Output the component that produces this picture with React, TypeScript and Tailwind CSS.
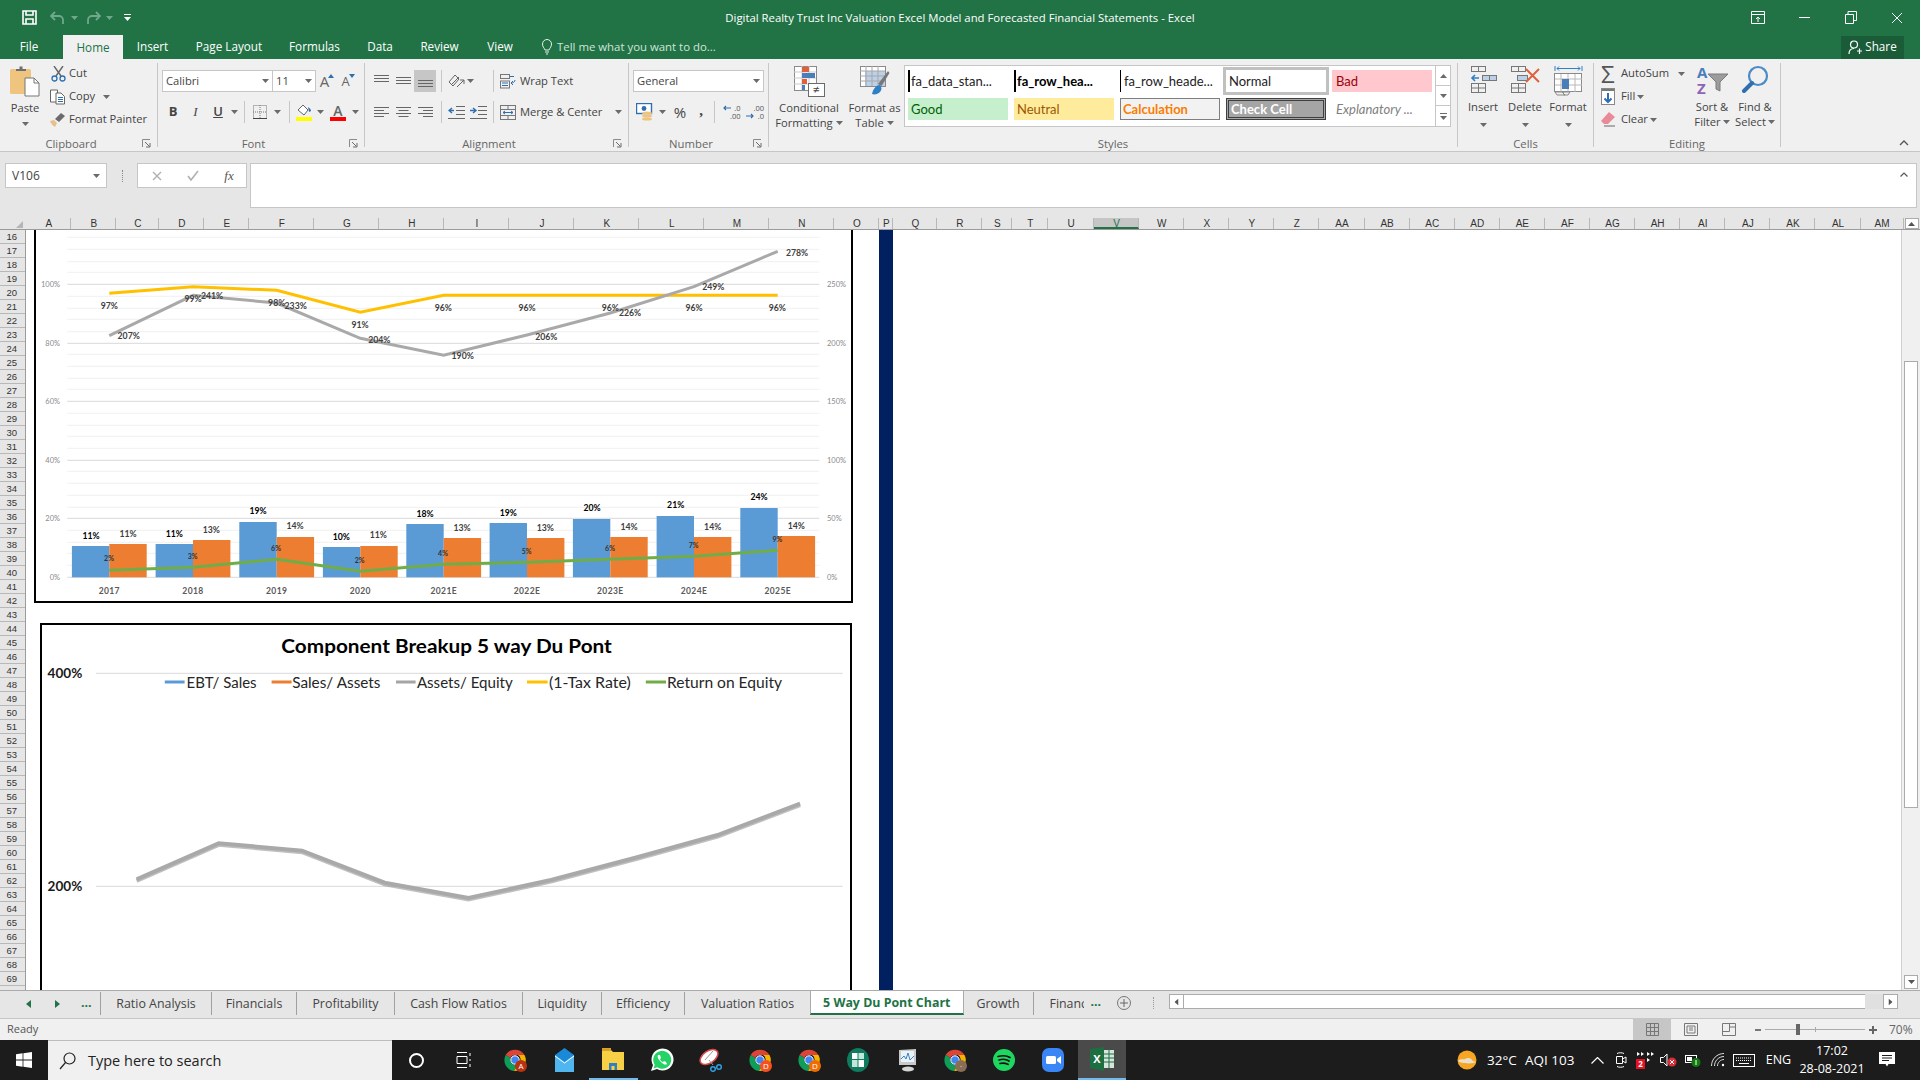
import type { ReactNode } from 'react';

// --- small ribbon helpers ---
const Caret = ({ className = '', color = '#6a6a6a' }: { className?: string; color?: string }) => (
  <svg width="7" height="4" viewBox="0 0 7 4" className={className}>
    <polygon points="0,0 7,0 3.5,4" fill={color} />
  </svg>
);

const Launcher = () => (
  <svg width="9" height="9" viewBox="0 0 9 9" className="mt-[3px]">
    <path d="M.5 8V.5H8" fill="none" stroke="#8a8a8a" />
    <path d="M3 3l4.5 4.5M8 4v4H4" fill="none" stroke="#6a6a6a" />
  </svg>
);

const Group = ({ width, label, launcher, children }: { width: string; label: string; launcher?: boolean; children: ReactNode }) => (
  <div className={`${width} h-[84px] shrink-0 border-r border-[#c6c6c6] flex flex-col`}>
    <div className="h-[70px] shrink-0">{children}</div>
    <div className="h-[20px] shrink-0 flex leading-[21px] text-[#666] text-[11.3px]">
      <div className="flex-1 text-center">{label}</div>
      {launcher && <div className="w-[15px] pt-[3px]"><Launcher /></div>}
    </div>
  </div>
);

const Lines = ({ rows, color = '#666' }: { rows: number[][]; color?: string }) => (
  <svg width="15" height="13" viewBox="0 0 15 13">
    {rows.map((r, i) => <line key={i} x1={r[0]} x2={r[1]} y1={r[2]} y2={r[2]} stroke={color} />)}
  </svg>
);

const Sep = ({ className = '' }: { className?: string }) => <div className={`w-px h-[22px] bg-[#c6c6c6] ${className}`} />;

const Cell = ({ width, children, className = '' }: { width: string; children?: ReactNode; className?: string }) => (
  <div className={`${width} h-full shrink-0 flex items-center justify-center ${className}`}>{children}</div>
);

const ClipboardIcon = () => (
  <svg width="30" height="32" viewBox="0 0 30 32">
    <rect x="0" y="3" width="21" height="25" rx="1.5" fill="#eec47f" />
    <path d="M6 5V3h3.5V.5h3V3H16v2z" fill="#6e6e6e" />
    <path d="M15 12h9l5 5v13H15z" fill="#fff" stroke="#777" />
    <path d="M24 12v5h5" fill="none" stroke="#777" />
  </svg>
);

const ScissorsIcon = () => (
  <svg width="15" height="16" viewBox="0 0 15 16" fill="none">
    <path d="M3 0l7 10M12 0L5 10" stroke="#666" strokeWidth="1.4" />
    <circle cx="3.5" cy="12.5" r="2.5" stroke="#2f6fb0" strokeWidth="1.3" />
    <circle cx="11.5" cy="12.5" r="2.5" stroke="#2f6fb0" strokeWidth="1.3" />
  </svg>
);

const CopyIcon = () => (
  <svg width="16" height="16" viewBox="0 0 16 16" fill="none" stroke="#666">
    <path d="M.5 1h7v12h-7z" fill="#fff" />
    <path d="M6 4h5l3.5 3.5V15H6z" fill="#fff" />
    <path d="M8 8.5h5M8 10.5h5M8 12.5h5" stroke="#2f6fb0" />
  </svg>
);

const PainterIcon = () => (
  <svg width="16" height="15" viewBox="0 0 16 15">
    <path d="M0 9l4-1 3 3-2 4c-2-1-4-3-5-6z" fill="#e9c088" />
    <path d="M5 7l6-6 4 3-6 6z" fill="#6b6b6b" />
  </svg>
);

const GrowIcon = ({ size, up }: { size: string; up: boolean }) => (
  <div className="flex items-start">
    <span className={`${size} leading-[14px] text-[#666]`}>A</span>
    <svg width="6" height="4" viewBox="0 0 6 4" className="-ml-px">
      <polygon points={up ? '0,4 6,4 3,0' : '0,0 6,0 3,4'} fill="#2f6fb0" />
    </svg>
  </div>
);

const BordersIcon = () => (
  <svg width="14" height="14" viewBox="0 0 14 14" stroke="#777" strokeDasharray="1 1" fill="none">
    <rect x=".5" y=".5" width="13" height="13" />
    <path d="M7 0v14M0 7h14" />
    <path d="M0 13.5h14" strokeDasharray="none" stroke="#444" />
  </svg>
);

const FillIcon = () => (
  <svg width="17" height="18" viewBox="0 0 17 18">
    <path d="M2 7l5-5 5 5-4 5z" fill="#fff" stroke="#666" />
    <path d="M12 4c2 1 3 3 3 4l-2 1z" fill="#2f6fb0" />
    <rect x="0" y="14" width="16" height="4" fill="#ffff00" />
  </svg>
);

const FontColorIcon = () => (
  <div className="flex flex-col items-center w-[16px]">
    <span className="text-[14px] leading-[13px] font-semibold text-[#666]">A</span>
    <div className="w-[16px] h-[4px] bg-[#ff0000]" />
  </div>
);

const OrientIcon = () => (
  <svg width="17" height="16" viewBox="0 0 17 16" fill="none" stroke="#666">
    <path d="M1 9l6-7 4 4-6 7z" />
    <path d="M3 12l8-8" />
    <path d="M9 14l7-7M16 11V7h-4" />
  </svg>
);

const WrapIcon = () => (
  <svg width="16" height="15" viewBox="0 0 16 15" fill="none">
    <rect x=".5" y=".5" width="9" height="4" stroke="#777" />
    <rect x=".5" y="7" width="9" height="7" stroke="#777" />
    <path d="M2 9h6M2 11.5h6" stroke="#2f6fb0" />
    <path d="M10 2.5h4M15 6c0 2-2 3-4 3m2-2l-2 2 2 2" stroke="#2f6fb0" />
  </svg>
);

const MergeIcon = () => (
  <svg width="16" height="15" viewBox="0 0 16 15" fill="none">
    <rect x=".5" y=".5" width="15" height="14" stroke="#777" />
    <path d="M0 4.5h16M0 10.5h16M8 0v4.5M8 10.5V15" stroke="#777" />
    <path d="M3 7.5h10M3 7.5l2-1.5M3 7.5l2 1.5M13 7.5L11 6M13 7.5L11 9" stroke="#2f6fb0" />
  </svg>
);

const IndentIcon = ({ inc }: { inc?: boolean }) => (
  <svg width="17" height="13" viewBox="0 0 17 13" fill="none">
    <path d="M8 .5h9M8 4.5h9M8 8.5h9M0 12.5h17" stroke="#666" />
    <path d={inc ? 'M0 4.5h5M3 2l3 2.5L3 7' : 'M6 4.5H1M4 2L1 4.5 4 7'} stroke="#2f6fb0" strokeWidth="1.4" />
  </svg>
);

const AccountingIcon = () => (
  <svg width="17" height="18" viewBox="0 0 17 18">
    <rect x=".5" y=".5" width="15" height="10" fill="#fff" stroke="#2f6fb0" strokeWidth="1.4" />
    <circle cx="8" cy="5.5" r="2.4" fill="#2f6fb0" />
    <ellipse cx="11" cy="10" rx="5" ry="1.6" fill="#eec47f" />
    <ellipse cx="11" cy="13" rx="5" ry="1.6" fill="#eec47f" />
    <ellipse cx="11" cy="16" rx="5" ry="1.6" fill="#eec47f" />
  </svg>
);

const DecimalIcon = ({ more }: { more?: boolean }) => (
  <div className="w-[18px] text-[7.5px] leading-[8px] text-[#555] relative">
    <div className="text-right">{more ? '.00' : '.0'}</div>
    <div className="text-right">{more ? '.0' : '.00'}</div>
    <svg width="8" height="6" viewBox="0 0 8 6" className={`absolute left-0 ${more ? 'top-[9px]' : 'top-[1px]'}`} fill="none" stroke="#2f6fb0" strokeWidth="1.2">
      <path d={more ? 'M0 3h7M5 1l2 2-2 2' : 'M8 3H1M3 1L1 3l2 2'} />
    </svg>
  </div>
);

const CondFormatIcon = () => (
  <svg width="31" height="31" viewBox="0 0 31 31">
    <rect x=".5" y=".5" width="22" height="24" fill="#fff" stroke="#8a8a8a" />
    <path d="M8 0v24M15 0v24M0 6h22M0 12h22M0 18h22" stroke="#c9c9c9" />
    <rect x="8" y="1" width="7" height="5" fill="#e0603c" />
    <rect x="8" y="7" width="13" height="5" fill="#4a7ebb" />
    <rect x="8" y="13" width="5" height="5" fill="#e0603c" />
    <rect x="8" y="19" width="3" height="5" fill="#4a7ebb" />
    <rect x="14.5" y="17.5" width="16" height="13" fill="#fff" stroke="#6a6a6a" />
    <text x="22.5" y="28" textAnchor="middle" fontSize="12" fill="#444">≠</text>
  </svg>
);

const TableIcon = () => (
  <svg width="30" height="31" viewBox="0 0 30 31">
    <rect x=".5" y=".5" width="25" height="20" fill="#fff" stroke="#8a8a8a" />
    <rect x="5" y="5" width="20" height="15" fill="#bcd0e8" />
    <path d="M6 0v20M12 0v20M18 0v20M0 5h25M0 10h25M0 15h25" stroke="#a8a8a8" />
    <path d="M18 18L28 5l1.5 2-8 13z" fill="#777" />
    <path d="M12 28c1-5 4-9 8-9 2 2 2 5 0 7-2 2-5 3-8 2z" fill="#2f7fc5" />
  </svg>
);

const InsertIcon = () => (
  <svg width="27" height="27" viewBox="0 0 27 27" fill="none">
    <rect x="1.5" y=".5" width="14" height="5" stroke="#777" />
    <path d="M8.5 0v5" stroke="#777" />
    <rect x="12.5" y="9.5" width="14" height="5" fill="#bcd0e8" stroke="#777" />
    <path d="M19.5 9v6" stroke="#777" />
    <path d="M9 12H2M5 9l-3 3 3 3" stroke="#2f7fc5" strokeWidth="1.6" />
    <rect x="1.5" y="17.5" width="14" height="9" stroke="#777" />
    <path d="M8.5 17v10M1 22h15" stroke="#777" />
  </svg>
);

const DeleteIcon = () => (
  <svg width="31" height="27" viewBox="0 0 31 27" fill="none">
    <rect x="1.5" y=".5" width="14" height="5" stroke="#777" />
    <path d="M8.5 0v5" stroke="#777" />
    <rect x="7.5" y="9.5" width="10" height="5" fill="#bcd0e8" stroke="#777" />
    <rect x="1.5" y="17.5" width="14" height="9" stroke="#777" />
    <path d="M8.5 17v10M1 22h15" stroke="#777" />
    <path d="M16 3l13 13M29 3L16 16" stroke="#e0603c" strokeWidth="2" />
  </svg>
);

const FormatIcon = () => (
  <svg width="29" height="30" viewBox="0 0 29 30" fill="none">
    <path d="M1 0v5M28 0v5M3 2.5h23M3 2.5l2-2M3 2.5l2 2M26 2.5l-2-2M26 2.5l-2 2" stroke="#2f7fc5" />
    <rect x=".5" y="7.5" width="27" height="18" fill="#fff" stroke="#8a8a8a" />
    <path d="M7 8v18M14 8v18M21 8v18M1 13h27M1 19h27" stroke="#b8b8b8" />
    <rect x="8" y="13" width="7" height="10" fill="#4a7ebb" />
    <path d="M1 26h7l3 3H3zM9 26h7l-2 3h-4z" stroke="#8a8a8a" />
  </svg>
);

const FillDownIcon = () => (
  <svg width="14" height="17" viewBox="0 0 14 17" fill="none">
    <rect x=".5" y=".5" width="13" height="16" fill="#fff" stroke="#888" />
    <path d="M1 1h12v2H1z" fill="#777" />
    <path d="M7 5v9M3.5 10.5L7 14l3.5-3.5" stroke="#2f6fb0" strokeWidth="2" />
  </svg>
);

const EraserIcon = () => (
  <svg width="15" height="15" viewBox="0 0 15 15">
    <path d="M0 9l8-9 6 5-7 7H3z" fill="#e98a98" />
    <path d="M3 14h11" stroke="#666" />
  </svg>
);

const SortIcon = () => (
  <svg width="32" height="31" viewBox="0 0 32 31">
    <text x="1" y="13" fontSize="15" fontWeight="700" fill="#4a7ebb">A</text>
    <text x="1" y="29" fontSize="15" fontWeight="700" fill="#8e63b5">Z</text>
    <path d="M12 9h20l-8 8v9l-4-2v-7z" fill="#9c9c9c" stroke="#7a7a7a" />
  </svg>
);

const FindIcon = () => (
  <svg width="28" height="28" viewBox="0 0 28 28" fill="none">
    <circle cx="17" cy="11" r="9" stroke="#4a8ac7" strokeWidth="2.2" />
    <path d="M11 18L3 26" stroke="#2f6fb0" strokeWidth="4" strokeLinecap="round" />
  </svg>
);

// --- taskbar icons ---
const ChromeIcon = ({ badge, badgeColor }: { badge?: string; badgeColor?: string }) => (
  <svg width="24" height="24" viewBox="0 0 24 24">
    <path d="M2.6 7A11 11 0 0 1 21.5 7H12a5 5 0 0 0-4.6 3z" fill="#db4437" />
    <path d="M2.6 7A11 11 0 0 0 11 23l5-8a5 5 0 0 1-8.5-5z" fill="#0f9d58" />
    <path d="M21.5 7A11 11 0 0 1 11 23l5-8a5 5 0 0 0-1-8z" fill="#f4b400" />
    <circle cx="12" cy="12" r="4.2" fill="#4285f4" stroke="#fff" />
    {badge && <circle cx="18" cy="18" r="6" fill={badgeColor} />}
    {badge && <text x="18" y="21" textAnchor="middle" fontSize="8" fill="#fff">{badge}</text>}
  </svg>
);

const taskApps: ReactNode[] = [
  <ChromeIcon badge="A" badgeColor="#b8330f" />,
  <svg width="19" height="24" viewBox="0 0 19 24"><path d="M0 7l9.5-7L19 7v17H0z" fill="#1a8ad8" /><path d="M0 7l9.5 7L19 7v17H0z" fill="#4fb6f0" /><path d="M0 8l9.5 7L19 8" fill="none" stroke="#fff" /></svg>,
  <svg width="22" height="22" viewBox="0 0 22 22"><path d="M0 2h9l2 2h11v18H0z" fill="#f7d046" /><path d="M0 0h9v3H0z" fill="#d9a227" /><rect x="7" y="15" width="8" height="7" fill="#2f7fc5" /><rect x="9.5" y="18" width="3" height="4" fill="#f7d046" /></svg>,
  <svg width="24" height="24" viewBox="0 0 24 24"><path d="M1 23l2-6a11 11 0 1 1 4 4z" fill="#fff" /><path d="M3.5 20.5l1.2-3.800a9 9 0 1 1 2.6 2.600z" fill="#25d366" /><path d="M8 7c-1 2 0 4 3 7s5 3 6 2l-1-2-2-1-1 1c-1 0-3-2-3-3l1-1-1-3z" fill="#fff" /></svg>,
  <svg width="24" height="24" viewBox="0 0 24 24"><ellipse cx="10" cy="9" rx="10" ry="6" fill="#fff" stroke="#d94a4a" strokeWidth="1.5" transform="rotate(-35 10 9)" /><path d="M6 12l8-9M10 12l4 5" stroke="#999" /><circle cx="14" cy="21" r="2.3" fill="none" stroke="#2f9fe0" strokeWidth="1.5" /><circle cx="20" cy="19" r="2.3" fill="none" stroke="#2f9fe0" strokeWidth="1.5" /></svg>,
  <ChromeIcon badge="D" badgeColor="#f4511e" />,
  <ChromeIcon badge="D" badgeColor="#ef6c00" />,
  <svg width="22" height="24" viewBox="0 0 22 24"><ellipse cx="11" cy="12" rx="11" ry="12" fill="#0f7b5f" /><rect x="5" y="5" width="5.5" height="6" fill="#fff" /><rect x="11.5" y="5" width="5.5" height="6" fill="#bfe8da" /><rect x="5" y="12" width="5.5" height="7" fill="#bfe8da" /><rect x="11.5" y="12" width="5.5" height="7" fill="#fff" /></svg>,
  <svg width="24" height="24" viewBox="0 0 24 24"><path d="M4 2l17-1v16H4z" fill="#c9c9c9" /><rect x="6" y="3" width="13" height="11" fill="#eaf3fa" /><path d="M6 11l3-3 2 3 2-6 2 7 4-4" fill="none" stroke="#3b82c4" /><ellipse cx="13" cy="21" rx="6" ry="2.5" fill="#d5d5d5" /></svg>,
  <ChromeIcon badge="·" badgeColor="#8a6d55" />,
  <svg width="22" height="22" viewBox="0 0 22 22"><circle cx="11" cy="11" r="11" fill="#1ed760" /><path d="M5 7.5c4-1 9-1 12 1M6 11c3-1 7-1 10 1M7 14.5c3-.7 5-.5 8 .8" fill="none" stroke="#111" strokeWidth="1.7" strokeLinecap="round" /></svg>,
  <svg width="22" height="24" viewBox="0 0 22 24"><rect width="22" height="24" rx="7" fill="#3b86f6" /><rect x="4" y="8" width="10" height="8" rx="1.5" fill="#fff" /><path d="M15 11l4-3v8l-4-3z" fill="#fff" /></svg>,
];

const ExcelIcon = () => (
  <svg width="24" height="24" viewBox="0 0 24 24">
    <path d="M0 2l14-2v24L0 21z" fill="#1d6f42" />
    <rect x="14" y="3" width="10" height="18" fill="#d7e6dc" />
    <path d="M14 7h10M14 11h10M14 15h10M19 3v18" stroke="#1d6f42" />
    <text x="7" y="16" textAnchor="middle" fontSize="11" fontWeight="700" fill="#fff">X</text>
  </svg>
);

// --- chart data (screen coordinates, the svg viewBox lines up with the page) ---
const cats = ['2017', '2018', '2019', '2020', '2021E', '2022E', '2023E', '2024E', '2025E'];
const catX = [109.3, 193, 276.7, 360.3, 443.7, 527, 610.3, 694, 777.7];
const y0 = 577.3;
const blueTop = [546, 544, 522, 547, 524, 523, 519, 516, 508];
const orangeTop = [544, 540, 537, 546, 538, 538, 537, 537, 536];
const yellowY = [293.3, 286.7, 290.3, 312.3, 295.3, 295.3, 295.3, 295.3, 295.3];
const greyY = [335.7, 295.3, 303, 338.3, 355.3, 335, 313, 286.7, 251.3];
const greenY = [570.3, 567.3, 559.3, 571.3, 564.3, 562.3, 559.3, 556.3, 550.3];
const majors = [284.3, 343.3, 401.3, 460.3, 518.3, 577.3];
const leftAxis = ['100%', '80%', '60%', '40%', '20%', '0%'];
const rightAxis = ['250%', '200%', '150%', '100%', '50%', '0%'];
const minors = [237.3, 249.3, 261.7, 272.3, 296.3, 308.3, 319.3, 331.7, 354.3, 366.3, 378.3, 389.3, 413.3, 425.3, 436.3, 448.3, 471.3, 483.3, 495.3, 507.3, 530.3, 542.3, 553.3, 565.3];

type Lbl = [string, number, number];
const yellowLbl: Lbl[] = [['97%', 109.3, 305.7], ['99%', 193, 298.3], ['98%', 276.7, 302.7], ['91%', 360, 324.7], ['96%', 443.3, 307.7], ['96%', 527, 307.7], ['96%', 610.3, 307.7], ['96%', 694, 307.7], ['96%', 777.3, 307.7]];
const greyLbl: Lbl[] = [['207%', 128.7, 335.7], ['241%', 212, 295.7], ['233%', 295.7, 305], ['204%', 379.3, 339.7], ['190%', 462.7, 355.7], ['206%', 546.3, 336.7], ['226%', 630, 312.7], ['249%', 713.3, 286.7], ['278%', 797, 252.7]];
const blueLbl: Lbl[] = [['11%', 91, 535.7], ['11%', 174.3, 533.7], ['19%', 258, 510.7], ['10%', 341.3, 536.7], ['18%', 425, 513.7], ['19%', 508.3, 512.7], ['20%', 592, 507.7], ['21%', 675.7, 504.7], ['24%', 759, 496.7]];
const orangeLbl: Lbl[] = [['11%', 128, 533.7], ['13%', 211.3, 529.7], ['14%', 295, 525.7], ['11%', 378.3, 534.7], ['13%', 462, 527.7], ['13%', 545.3, 527.7], ['14%', 629, 526.7], ['14%', 712.7, 526.7], ['14%', 796.3, 525.7]];
const greenLbl: Lbl[] = [['2%', 109, 558.3], ['3%', 192.7, 555.7], ['6%', 276, 548.3], ['2%', 359.7, 560.3], ['4%', 443, 553.3], ['5%', 526.7, 551.3], ['6%', 610, 548.3], ['7%', 693.7, 545.3], ['9%', 777.3, 539.3]];

const pts = (ys: number[]) => ys.map((y, i) => `${catX[i]},${y}`).join(' ');

const ChartOne = () => (
  <svg width="815" height="371" viewBox="36 230 815 371" className="block [font-family:'Lato',sans-serif]">
    {minors.map((y) => <line key={y} x1="67.3" x2="819.3" y1={y} y2={y} stroke="#f0f0f0" />)}
    {majors.map((y) => <line key={y} x1="67.3" x2="819.3" y1={y} y2={y} stroke="#d9d9d9" />)}
    {majors.map((y, i) => (
      <text key={i} x="60" y={y} textAnchor="end" dominantBaseline="central" fontSize="7.5" fill="#8a8a8a">{leftAxis[i]}</text>
    ))}
    {majors.map((y, i) => (
      <text key={i} x="827" y={y} dominantBaseline="central" fontSize="7.5" fill="#8a8a8a">{rightAxis[i]}</text>
    ))}
    {catX.map((x, i) => <rect key={i} x={x - 37.4} y={blueTop[i]} width="37.4" height={y0 - blueTop[i]} fill="#5b9bd5" />)}
    {catX.map((x, i) => <rect key={i} x={x} y={orangeTop[i]} width="37.4" height={y0 - orangeTop[i]} fill="#ed7d31" />)}
    <polyline points={pts(yellowY)} fill="none" stroke="#ffc000" strokeWidth="3" />
    <polyline points={pts(greyY)} fill="none" stroke="#a9a9a9" strokeWidth="3" />
    <polyline points={pts(greenY)} fill="none" stroke="#70ad47" strokeWidth="3" />
    {[...yellowLbl, ...greyLbl, ...orangeLbl].map(([t, x, y], i) => (
      <text key={i} x={x} y={y} textAnchor="middle" dominantBaseline="central" fontSize="8.7" fontWeight="700" fill="#404040">{t}</text>
    ))}
    {blueLbl.map(([t, x, y], i) => (
      <text key={i} x={x} y={y} textAnchor="middle" dominantBaseline="central" fontSize="8.7" fontWeight="700" fill="#000">{t}</text>
    ))}
    {greenLbl.map(([t, x, y], i) => (
      <text key={i} x={x} y={y} textAnchor="middle" dominantBaseline="central" fontSize="7" fontWeight="700" fill="#333">{t}</text>
    ))}
    {catX.map((x, i) => (
      <text key={i} x={x} y="590.7" textAnchor="middle" dominantBaseline="central" fontSize="8.5" fontWeight="700" letterSpacing=".4" fill="#595959">{cats[i]}</text>
    ))}
  </svg>
);

const legend: [string, number, number, string, number, number][] = [
  ['#5b9bd5', 164.8, 184.6, 'EBT/ Sales', 186.6, 70],
  ['#ed7d31', 271.6, 291.6, 'Sales/ Assets', 292.2, 88.3],
  ['#a5a5a5', 396, 415.6, 'Assets/ Equity', 416.9, 95.8],
  ['#ffc000', 527, 547.6, '(1-Tax Rate)', 548.9, 81.9],
  ['#70ad47', 645.8, 666, 'Return on Equity', 667, 115.1],
];
const duPont = '136.6,879.3 218.7,843.3 302,850.7 384.6,882.7 468.5,898 551,880 637.2,857.3 717.6,835 800.1,803.7';

const ChartTwo = () => (
  <svg width="808" height="365" viewBox="42 625 808 365" className="block [font-family:'Lato',sans-serif]">
    <text x="446.6" y="645" textAnchor="middle" dominantBaseline="central" fontSize="19.5" fontWeight="700" fill="#000" textLength="330.5" lengthAdjust="spacingAndGlyphs">Component Breakup 5 way Du Pont</text>
    <line x1="95.9" x2="842.7" y1="673.3" y2="673.3" stroke="#d9d9d9" />
    <line x1="95.9" x2="842.7" y1="886.3" y2="886.3" stroke="#d9d9d9" />
    <text x="47.6" y="672.5" dominantBaseline="central" fontSize="14" fontWeight="700" fill="#1a1a1a" textLength="34.7" lengthAdjust="spacingAndGlyphs">400%</text>
    <text x="47.6" y="885.5" dominantBaseline="central" fontSize="14" fontWeight="700" fill="#1a1a1a" textLength="34.7" lengthAdjust="spacingAndGlyphs">200%</text>
    {legend.map(([c, x1, x2, t, tx, tw]) => (
      <g key={t}>
        <line x1={x1} x2={x2} y1="682" y2="682" stroke={c} strokeWidth="3" />
        <text x={tx} y="682" dominantBaseline="central" fontSize="15.5" fill="#262626" textLength={tw} lengthAdjust="spacingAndGlyphs">{t}</text>
      </g>
    ))}
    <polyline points={duPont} transform="translate(0 1.5)" fill="none" stroke="#8c8c8c" strokeOpacity=".55" strokeWidth="4" />
    <polyline points={duPont} fill="none" stroke="#a9a9a9" strokeWidth="4" />
  </svg>
);

const colLabels = ['A', 'B', 'C', 'D', 'E', 'F', 'G', 'H', 'I', 'J', 'K', 'L', 'M', 'N', 'O', 'P', 'Q', 'R', 'S', 'T', 'U', 'V', 'W', 'X', 'Y', 'Z', 'AA', 'AB', 'AC', 'AD', 'AE', 'AF', 'AG', 'AH', 'AI', 'AJ', 'AK', 'AL', 'AM'];
const rowLabels = Array.from({ length: 54 }, (_, i) => i + 16);

const sheetTabs: [string, string][] = [
  ['Ratio Analysis', 'w-[111px]'],
  ['Financials', 'w-[85px]'],
  ['Profitability', 'w-[98px]'],
  ['Cash Flow Ratios', 'w-[128px]'],
  ['Liquidity', 'w-[79px]'],
  ['Efficiency', 'w-[83px]'],
  ['Valuation Ratios', 'w-[126px]'],
];

export default function App() {
  return (
    <div className="w-[1920px] h-[1080px] overflow-hidden flex flex-col bg-[#f0f0f0] text-[#444] text-[12px] [font-family:'Open_Sans',sans-serif]">
      {/* title bar */}
      <div className="h-[59px] shrink-0 bg-[#217346] text-white">
        <div className="h-[35px] grid grid-cols-[1fr_auto_1fr] items-center">
          <div className="flex items-center pl-[22px]">
            <svg width="15" height="15" viewBox="0 0 15 15" fill="none" stroke="#fff" strokeWidth="1.6"><path d="M1 1h13v13H1z" /><path d="M4 1v4h7V1M4 14V9h7v5" /></svg>
            <svg width="16" height="14" viewBox="0 0 16 14" fill="none" stroke="#6fa88a" strokeWidth="1.8" className="ml-[13px]"><path d="M5 1L1 5l4 4M1 5h8a4 4 0 0 1 4 4v4" /></svg>
            <Caret className="ml-[5px]" color="#6fa88a" />
            <svg width="16" height="14" viewBox="0 0 16 14" fill="none" stroke="#6fa88a" strokeWidth="1.8" className="ml-[7px]"><path d="M11 1l4 4-4 4M15 5H7a4 4 0 0 0-4 4v4" /></svg>
            <Caret className="ml-[5px]" color="#6fa88a" />
            <svg width="7" height="7" viewBox="0 0 7 7" className="ml-[11px]"><path d="M0 .5h7" stroke="#fff" /><polygon points="0,3 7,3 3.5,7" fill="#fff" /></svg>
          </div>
          <div className="text-[11.35px]">Digital Realty Trust Inc Valuation Excel Model and Forecasted Financial Statements - Excel</div>
          <div className="flex items-center justify-end">
            <svg width="14" height="13" viewBox="0 0 14 13" fill="none" stroke="#fff"><path d="M.5.5h13v12H.5zM.5 3.5h13M7 11V6M5 8l2-2 2 2" /></svg>
            <div className="w-[11px] h-px bg-white ml-[34px]" />
            <svg width="12" height="13" viewBox="0 0 12 13" fill="none" stroke="#fff" className="ml-[35px]"><path d="M.5 3.5h8v9h-8zM3 3V.5h8.5v9H9" /></svg>
            <svg width="12" height="12" viewBox="0 0 12 12" fill="none" stroke="#fff" className="ml-[34px] mr-[17px]"><path d="M1 1l10 10M11 1L1 11" /></svg>
          </div>
        </div>
        <div className="h-[24px] flex items-center text-[11.7px] text-center">
          <div className="w-[58px] mr-[5px]">File</div>
          <div className="w-[60px] h-full leading-[24px] bg-[#f0f0f0] text-[#217346]">Home</div>
          <div className="w-[59px]">Insert</div>
          <div className="w-[94px]">Page Layout</div>
          <div className="w-[77px]">Formulas</div>
          <div className="w-[54px]">Data</div>
          <div className="w-[65px]">Review</div>
          <div className="w-[56px]">View</div>
          <div className="ml-[14px] flex items-center text-[#d3e3da] text-[11.4px]">
            <svg width="10" height="16" viewBox="0 0 10 16" fill="none" stroke="#e8f0eb"><path d="M3 11C2 8.5.5 8 .5 5a4.5 4.5 0 0 1 9 0C9.5 8 8 8.5 7 11zM3 13h4M4 15h2" /></svg>
            <span className="ml-[5px]">Tell me what you want to do...</span>
          </div>
          <div className="ml-auto mr-[16px] w-[63px] h-[23px] bg-[#1a5c38] flex items-center justify-center text-white">
            <svg width="14" height="15" viewBox="0 0 14 15" fill="none" stroke="#fff" strokeWidth="1.2"><circle cx="6" cy="4.5" r="3.5" /><path d="M1 14c0-4 2-5.5 5-5.5M9 11h5M11.5 8.5V14" /></svg>
            <span className="ml-[3px]">Share</span>
          </div>
        </div>
      </div>

      {/* ribbon */}
      <div className="h-[93px] shrink-0 flex pt-[4px] bg-[#f0f0f0] border-b border-[#c6c6c6] text-[11.2px]">
        <Group width="w-[158px]" label="Clipboard" launcher>
          <div className="flex h-full">
            <div className="w-[36px] ml-[7px] flex flex-col items-center pt-[3px]">
              <ClipboardIcon />
              <div className="mt-[3px] leading-[14px]">Paste</div>
              <Caret className="mt-[7px]" />
            </div>
            <div className="ml-[6px] -mt-[1px]">
              <div className="h-[23px] flex items-center"><Cell width="w-[18px]"><ScissorsIcon /></Cell><span className="ml-[2px]">Cut</span></div>
              <div className="h-[23px] flex items-center"><Cell width="w-[18px]"><CopyIcon /></Cell><span className="ml-[2px]">Copy</span><Caret className="ml-[8px]" /></div>
              <div className="h-[23px] flex items-center"><Cell width="w-[18px]"><PainterIcon /></Cell><span className="ml-[2px]">Format Painter</span></div>
            </div>
          </div>
        </Group>
        <Group width="w-[207px]" label="Font" launcher>
          <div className="pl-[4px] pt-[7px]">
            <div className="flex h-[22px]">
              <div className="w-[111px] bg-white border border-[#c6c6c6] flex items-center justify-between px-[3px]"><span>Calibri</span><Caret /></div>
              <div className="w-[43px] bg-white border border-l-0 border-[#c6c6c6] flex items-center justify-between px-[3px]"><span>11</span><Caret /></div>
              <Cell width="w-[22px]"><GrowIcon size="text-[15px]" up /></Cell>
              <Cell width="w-[20px]"><GrowIcon size="text-[13px]" up={false} /></Cell>
            </div>
            <div className="flex h-[24px] mt-[8px]">
              <Cell width="w-[22px]" className="font-bold text-[13px]">B</Cell>
              <Cell width="w-[23px]" className="italic text-[13px] [font-family:'Liberation_Serif',serif]">I</Cell>
              <Cell width="w-[22px]" className="underline font-semibold text-[13px]">U</Cell>
              <Cell width="w-[10px]"><Caret /></Cell>
              <Cell width="w-[11px]"><Sep /></Cell>
              <Cell width="w-[20px]"><BordersIcon /></Cell>
              <Cell width="w-[14px]"><Caret /></Cell>
              <Cell width="w-[10px]"><Sep /></Cell>
              <Cell width="w-[20px]"><FillIcon /></Cell>
              <Cell width="w-[12px]"><Caret /></Cell>
              <Cell width="w-[24px]"><FontColorIcon /></Cell>
              <Cell width="w-[10px]"><Caret /></Cell>
            </div>
          </div>
        </Group>
        <Group width="w-[264px]" label="Alignment" launcher>
          <div className="pl-[5px] pt-[7px]">
            <div className="flex h-[22px]">
              <Cell width="w-[22px]"><Lines rows={[[0, 15, .5], [0, 15, 3.5], [0, 15, 6.5]]} /></Cell>
              <Cell width="w-[22px]"><Lines rows={[[0, 15, 2.5], [0, 15, 5.5], [0, 15, 8.5]]} /></Cell>
              <Cell width="w-[22px]" className="bg-[#c6c6c6]"><Lines rows={[[0, 15, 5.5], [0, 15, 8.5], [0, 15, 11.5]]} /></Cell>
              <Cell width="w-[10px]"><Sep /></Cell>
              <Cell width="w-[20px]"><OrientIcon /></Cell>
              <Cell width="w-[8px]"><Caret /></Cell>
              <Cell width="w-[20px]" className="justify-end"><Sep /></Cell>
              <Cell width="w-[16px]" className="ml-[6px]"><WrapIcon /></Cell>
              <span className="ml-[4px] leading-[22px] whitespace-nowrap">Wrap Text</span>
            </div>
            <div className="flex h-[24px] mt-[8px]">
              <Cell width="w-[22px]"><Lines rows={[[0, 15, 1.5], [0, 10, 4.5], [0, 15, 7.5], [0, 10, 10.5]]} /></Cell>
              <Cell width="w-[22px]"><Lines rows={[[0, 15, 1.5], [2.5, 12.5, 4.5], [0, 15, 7.5], [2.5, 12.5, 10.5]]} /></Cell>
              <Cell width="w-[22px]"><Lines rows={[[0, 15, 1.5], [5, 15, 4.5], [0, 15, 7.5], [5, 15, 10.5]]} /></Cell>
              <Cell width="w-[10px]"><Sep /></Cell>
              <Cell width="w-[21px]"><IndentIcon /></Cell>
              <Cell width="w-[22px]"><IndentIcon inc /></Cell>
              <Cell width="w-[5px]" className="justify-end"><Sep /></Cell>
              <Cell width="w-[16px]" className="ml-[6px]"><MergeIcon /></Cell>
              <span className="ml-[4px] w-[85px] leading-[24px] whitespace-nowrap">Merge &amp; Center</span>
              <Cell width="w-[14px]" className="ml-[6px]"><Caret /></Cell>
            </div>
          </div>
        </Group>
        <Group width="w-[140px]" label="Number" launcher>
          <div className="pl-[4px] pt-[7px]">
            <div className="w-[131px] h-[22px] bg-white border border-[#c6c6c6] flex items-center justify-between px-[3px]"><span>General</span><Caret /></div>
            <div className="flex h-[24px] mt-[8px]">
              <Cell width="w-[22px]"><AccountingIcon /></Cell>
              <Cell width="w-[14px]"><Caret /></Cell>
              <Cell width="w-[22px]" className="text-[15px]">%</Cell>
              <Cell width="w-[20px]" className="font-bold text-[15px] pb-[4px] [font-family:'Liberation_Serif',serif]">,</Cell>
              <Cell width="w-[6px]"><Sep /></Cell>
              <Cell width="w-[25px]" className="ml-[2px]"><DecimalIcon /></Cell>
              <Cell width="w-[22px]"><DecimalIcon more /></Cell>
            </div>
          </div>
        </Group>
        <Group width="w-[689px]" label="Styles">
          <div className="flex h-full">
            <div className="w-[80px] flex flex-col items-center pt-[3px] leading-[15px] text-center">
              <CondFormatIcon />
              <div className="mt-[3px]">Conditional</div>
              <div className="flex items-center">Formatting<Caret className="ml-[3px]" /></div>
            </div>
            <div className="w-[51px] flex flex-col items-center pt-[3px] leading-[15px] text-center whitespace-nowrap">
              <TableIcon />
              <div className="mt-[3px]">Format as</div>
              <div className="flex items-center">Table<Caret className="ml-[3px]" /></div>
            </div>
            <div className="ml-[4px] mt-[2px] w-[547px] h-[62px] flex bg-white border border-[#c6c6c6] [font-family:'Lato',sans-serif] text-[13px] text-[#222] overflow-hidden">
              <div className="w-[531px] pl-[3px] pt-[4px]">
                <div className="flex gap-[6px] h-[22px] leading-[22px]">
                  <div className="w-[100px] border-l-2 border-black pl-[1px] truncate">fa_data_stan...</div>
                  <div className="w-[100px] border-l-2 border-black pl-[1px] font-bold text-black truncate">fa_row_hea...</div>
                  <div className="w-[100px] border-l border-black pl-[3px] truncate">fa_row_heade...</div>
                  <div className="w-[106px] -ml-[3px] -mt-[3px] h-[28px] border-[3px] border-[#c0c0c0] pl-[3px] leading-[22px] bg-white">Normal</div>
                  <div className="w-[100px] -ml-[3px] pl-[4px] bg-[#ffc7ce] text-[#9c0006]">Bad</div>
                </div>
                <div className="flex gap-[6px] h-[22px] leading-[22px] mt-[6px]">
                  <div className="w-[100px] pl-[3px] bg-[#c6efce] text-[#006100]">Good</div>
                  <div className="w-[100px] pl-[3px] bg-[#ffeb9c] text-[#9c5700]">Neutral</div>
                  <div className="w-[100px] pl-[2px] bg-[#f2f2f2] border border-[#7f7f7f] leading-[20px] font-bold text-[#fa7d00]">Calculation</div>
                  <div className="w-[100px] pl-[2px] bg-[#a5a5a5] border-[3px] border-double border-[#3f3f3f] leading-[16px] font-bold text-white">Check Cell</div>
                  <div className="w-[100px] pl-[4px] italic text-[#7f7f7f]">Explanatory ...</div>
                </div>
              </div>
              <div className="w-[15px] border-l border-[#c6c6c6] flex flex-col">
                <div className="h-[20px] border-b border-[#c6c6c6] flex items-center justify-center"><Caret className="rotate-180" /></div>
                <div className="h-[20px] border-b border-[#c6c6c6] flex items-center justify-center"><Caret /></div>
                <div className="flex-1 flex flex-col items-center justify-center gap-[2px]"><div className="w-[7px] h-px bg-[#6a6a6a]" /><Caret /></div>
              </div>
            </div>
          </div>
        </Group>
        <Group width="w-[136px]" label="Cells">
          <div className="flex pl-[4px] h-full">
            {[
              { t: 'Insert', icon: <InsertIcon />, w: 'w-[42px]' },
              { t: 'Delete', icon: <DeleteIcon />, w: 'w-[42px]' },
              { t: 'Format', icon: <FormatIcon />, w: 'w-[44px]' },
            ].map((b) => (
              <div key={b.t} className={`${b.w} flex flex-col items-center`}>
                <div className="h-[36px] pt-[3px] flex items-start">{b.icon}</div>
                <div className="leading-[15px]">{b.t}</div>
                <Caret className="mt-[9px]" />
              </div>
            ))}
          </div>
        </Group>
        <Group width="w-[187px]" label="Editing">
          <div className="flex h-full">
            <div className="w-[97px] pl-[7px] -mt-[1px]">
              <div className="h-[23px] flex items-center">
                <span className="w-[16px] text-[24px] leading-[20px] text-[#555]">Σ</span>
                <span className="ml-[4px]">AutoSum</span>
                <Caret className="ml-[9px]" />
              </div>
              <div className="h-[23px] flex items-center"><FillDownIcon /><span className="ml-[6px]">Fill</span><Caret className="ml-[2px]" /></div>
              <div className="h-[23px] flex items-center"><EraserIcon /><span className="ml-[5px]">Clear</span><Caret className="ml-[2px]" /></div>
            </div>
            <div className="w-[42px] flex flex-col items-center leading-[15px] whitespace-nowrap">
              <div className="h-[36px] pt-[2px]"><SortIcon /></div>
              <div>Sort &amp;</div>
              <div className="flex items-center">Filter<Caret className="ml-[2px]" /></div>
            </div>
            <div className="w-[44px] flex flex-col items-center leading-[15px] whitespace-nowrap">
              <div className="h-[36px] pt-[2px]"><FindIcon /></div>
              <div>Find &amp;</div>
              <div className="flex items-center">Select<Caret className="ml-[2px]" /></div>
            </div>
          </div>
        </Group>
        <div className="flex-1 flex items-end justify-end pr-[11px] pb-[5px]">
          <svg width="10" height="6" viewBox="0 0 10 6" fill="none" stroke="#555" strokeWidth="1.3"><path d="M1 5l4-4 4 4" /></svg>
        </div>
      </div>

      {/* formula bar */}
      <div className="h-[66px] shrink-0 bg-[#e6e6e6] flex pt-[11px] pl-[5px] pr-[3px]">
        <div className="w-[102px] h-[25px] bg-white border border-[#c6c6c6] flex items-center justify-between px-[6px] text-[12px]"><span>V106</span><Caret /></div>
        <div className="w-[30px] h-[25px] flex items-center justify-center">
          <div className="h-[12px] border-l border-dotted border-[#888]" />
        </div>
        <div className="w-[110px] h-[25px] bg-white border border-[#c6c6c6] flex items-center text-[#b0b0b0]">
          <Cell width="w-[37px]"><svg width="10" height="10" viewBox="0 0 10 10" fill="none" stroke="#b0b0b0" strokeWidth="1.4"><path d="M1 1l8 8M9 1L1 9" /></svg></Cell>
          <Cell width="w-[36px]"><svg width="12" height="11" viewBox="0 0 12 11" fill="none" stroke="#b0b0b0" strokeWidth="1.6"><path d="M1 6l3 4 7-9" /></svg></Cell>
          <Cell width="w-[36px]" className="italic text-[#555] text-[13px] [font-family:'Liberation_Serif',serif]">fx</Cell>
        </div>
        <div className="ml-[3px] flex-1 h-[45px] bg-white border border-[#c6c6c6] flex justify-end pt-[8px] pr-[8px]">
          <svg width="8" height="5" viewBox="0 0 8 5" fill="none" stroke="#555" strokeWidth="1.2"><path d="M.5 4.5L4 1l3.5 3.5" /></svg>
        </div>
      </div>

      {/* column headers */}
      <div className="h-[12px] shrink-0 bg-[#e6e6e6] border-b border-[#9b9b9b] grid grid-rows-[11px] grid-cols-[26.4px_45px_45px_43px_45px_45px_65px_65px_65px_65px_65px_65px_65px_65px_65px_45px_14px_44px_45px_30px_36px_45.6px_45.1px_45.1px_45.1px_45.1px_45.1px_45.1px_45.1px_45.1px_45.1px_45.1px_45.1px_45.1px_45.1px_45.1px_45.1px_45.1px_45.1px_43px_1fr] text-[10px] leading-[11px] text-[#333] text-center [font-family:'Liberation_Sans',sans-serif]">
        <div className="flex items-end justify-end pr-[3px] pb-[1px]"><svg width="7" height="7" viewBox="0 0 7 7"><polygon points="7,0 7,7 0,7" fill="#b5b5b5" /></svg></div>
        {colLabels.map((c) => (
          <div key={c} className={`border-r border-[#b8b8b8] pl-[1px] ${c === 'V' ? 'bg-[#c6c6c6] text-[#217346] border-b-2 border-b-[#217346]' : ''}`}>{c}</div>
        ))}
        <div className="flex items-start justify-center">
          <div className="w-[14px] h-[11px] bg-white border border-[#ababab] flex items-center justify-center"><Caret className="rotate-180" color="#555" /></div>
        </div>
      </div>

      {/* sheet */}
      <div className="h-[760px] shrink-0 flex overflow-hidden bg-white">
        <div className="w-[26.4px] shrink-0 bg-[#e6e6e6] border-r border-[#9b9b9b] overflow-hidden [font-family:'Liberation_Sans',sans-serif] text-[9.5px] text-[#333] text-center">
          {rowLabels.map((r) => (
            <div key={r} className="h-[14px] leading-[14px] border-b border-[#b8b8b8] pr-[2px]">{r}</div>
          ))}
        </div>
        <div className="w-[853.6px] shrink-0 flex">
          <div className="w-[826px] ml-[7.6px] shrink-0">
            <div className="w-[819px] h-[373px] border-x-2 border-b-2 border-black"><ChartOne /></div>
            <div className="w-[812px] ml-[6px] mt-[20px] h-[400px] border-2 border-black"><ChartTwo /></div>
          </div>
          <div className="w-[14px] ml-[19px] bg-[#002060] shrink-0" />
        </div>
        <div className="flex-1" />
        <div className="w-[19px] shrink-0 bg-[#f0f0f0] border-l border-[#d0d0d0] flex flex-col items-center">
          <div className="w-[14px] h-[131px]" />
          <div className="w-[14px] h-[447px] bg-white border border-[#ababab]" />
          <div className="flex-1" />
          <div className="w-[14px] h-[14px] mb-[1px] bg-white border border-[#ababab] flex items-center justify-center"><Caret color="#555" /></div>
        </div>
      </div>

      {/* sheet tabs */}
      <div className="h-[28px] shrink-0 bg-[#e6e6e6] border-t border-[#ababab] flex text-[12.4px] text-[#444]">
        <div className="w-[100px] h-[25px] flex items-center text-[#217346] shrink-0">
          <svg width="5" height="8" viewBox="0 0 5 8" className="ml-[26px]"><polygon points="5,0 5,8 0,4" fill="#217346" /></svg>
          <svg width="5" height="8" viewBox="0 0 5 8" className="ml-[24px]"><polygon points="0,0 0,8 5,4" fill="#217346" /></svg>
          <span className="ml-[21px] font-bold">...</span>
        </div>
        {sheetTabs.map(([t, w]) => (
          <div key={t} className={`${w} h-[23px] mt-[1px] pt-[1px] border-l border-[#a0a0a0] flex items-center justify-center shrink-0`}>{t}</div>
        ))}
        <div className="w-[153.5px] h-[25px] -mt-px shrink-0 bg-white border-x border-t border-[#ababab] border-b-2 border-b-[#217346] flex items-center justify-center font-bold text-[#217346] pt-[2px]">5 Way Du Pont Chart</div>
        <div className="w-[69px] h-[25px] pt-[1px] flex items-center justify-center shrink-0">Growth</div>
        <div className="w-[52px] h-[23px] mt-[1px] pt-[1px] border-l border-[#a0a0a0] pl-[16px] flex items-center shrink-0 overflow-hidden"><span className="w-[34px] overflow-hidden whitespace-nowrap">Financial</span></div>
        <span className="w-[26px] mt-[2px] ml-[6px] font-bold text-[#217346]">...</span>
        <div className="w-[14px] h-[14px] mt-[5px] mr-[10px] rounded-full border border-[#777] flex items-center justify-center">
          <svg width="8" height="8" viewBox="0 0 8 8" stroke="#666"><path d="M4 0v8M0 4h8" /></svg>
        </div>
        <div className="w-[16px] h-[12px] mt-[6px] border-l border-dotted border-[#999] ml-[12px]" />
        <div className="w-[729px] h-[15px] mt-[3px] flex items-stretch">
          <div className="w-[15px] bg-white border border-[#ababab] flex items-center justify-center"><Caret className="rotate-90" color="#555" /></div>
          <div className="w-[681px] bg-white border-y border-[#ababab]" />
          <div className="flex-1 bg-[#e0e0e0]" />
          <div className="w-[15px] bg-white border border-[#ababab] flex items-center justify-center"><Caret className="-rotate-90" color="#555" /></div>
        </div>
      </div>

      {/* status bar */}
      <div className="h-[22px] shrink-0 bg-[#f0f0f0] border-t border-[#c6c6c6] flex items-center text-[11px] text-[#555]">
        <span className="pl-[7px]">Ready</span>
        <div className="ml-auto flex items-center h-full">
          <div className="w-[38px] h-full bg-[#c6c6c6] flex items-center justify-center">
            <svg width="13" height="13" viewBox="0 0 13 13" fill="none" stroke="#777"><path d="M.5.5h12v12H.5zM4.5 0v13M8.5 0v13M0 4.5h13M0 8.5h13" /></svg>
          </div>
          <Cell width="w-[39px]"><svg width="14" height="13" viewBox="0 0 14 13" fill="none" stroke="#777"><path d="M.5.5h13v12H.5zM3 3h8v7H3zM5 5h4M5 7h4" /></svg></Cell>
          <Cell width="w-[38px]"><svg width="14" height="13" viewBox="0 0 14 13" fill="none" stroke="#777"><path d="M.5.5h13v12H.5zM.5 8.5h7V0M7 4h6" /></svg></Cell>
          <span className="ml-[7px] w-[6px] h-[2px] bg-[#777]" />
          <div className="ml-[4px] w-[100px] h-px bg-[#aaa] flex items-center relative">
            <div className="absolute left-[31px] w-[4px] h-[11px] bg-[#666]" />
            <div className="absolute left-[50px] w-px h-[5px] bg-[#aaa]" />
          </div>
          <svg width="8" height="8" viewBox="0 0 8 8" className="ml-[4px]" stroke="#666" strokeWidth="2"><path d="M4 0v8M0 4h8" /></svg>
          <span className="ml-[12px] w-[31px] text-[12px] text-[#666]">70%</span>
        </div>
      </div>

      {/* taskbar */}
      <div className="h-[40px] shrink-0 bg-[#1c1c1c] flex items-center text-white">
        <div className="w-[48px] flex justify-center">
          <svg width="16" height="16" viewBox="0 0 16 16" fill="#fff"><path d="M0 2.2L6.6 1.3v6.3H0zM7.4 1.2L16 0v7.6H7.4zM0 8.4h6.6v6.3L0 13.8zM7.4 8.4H16V16l-8.6-1.200z" /></svg>
        </div>
        <div className="w-[344px] h-full bg-[#f0f0f0] border-t border-[#bdbdbd] flex items-center text-[#222] text-[14.5px]">
          <svg width="17" height="18" viewBox="0 0 17 18" fill="none" stroke="#222" strokeWidth="1.2" className="ml-[11px]"><circle cx="10.5" cy="6.5" r="5.5" /><path d="M6.5 10.5L1 17" /></svg>
          <span className="ml-[12px]">Type here to search</span>
        </div>
        <Cell width="w-[48px]"><div className="w-[15px] h-[15px] rounded-full border-2 border-white" /></Cell>
        <Cell width="w-[48px]">
          <svg width="17" height="16" viewBox="0 0 17 16" fill="none" stroke="#fff"><path d="M1 .5h10M1 15.5h10M1 4.5h10v7H1zM14 1v3M14 7v2M14 12v3" /></svg>
        </Cell>
        <div className="w-[3px]" />
        {taskApps.map((icon, i) => (
          <div key={i} className={`w-[48.9px] h-full flex items-center justify-center shrink-0 ${i === 2 ? 'border-b-2 border-[#76b9ed]' : ''}`}>{icon}</div>
        ))}
        <div className="w-[48px] h-full bg-[#4a4a4a] border-b-2 border-[#76b9ed] flex items-center justify-center shrink-0"><ExcelIcon /></div>
        <div className="ml-auto flex items-center h-full text-[13.5px]">
          <Cell width="w-[26px]">
            <svg width="20" height="20" viewBox="0 0 20 20"><circle cx="10" cy="10" r="9.5" fill="#f6a623" /><path d="M1 11c3-3 5-1 7-2 3-2 6-1 7 1s3 1 4 2c-2 2-15 2-18-1z" fill="#e8e0cf" /></svg>
          </Cell>
          <span className="ml-[7px] w-[29px]">32°C</span>
          <span className="ml-[9px] w-[50px] whitespace-nowrap">AQI 103</span>
          <Cell width="w-[24px]" className="ml-[10px]"><svg width="13" height="7" viewBox="0 0 13 7" fill="none" stroke="#fff" strokeWidth="1.2"><path d="M.5 6.5l6-6 6 6" /></svg></Cell>
          <Cell width="w-[24px]"><svg width="12" height="16" viewBox="0 0 12 16" fill="none" stroke="#fff"><path d="M2 1.5c2-1 5-1 7 0M2 14.5c2 1 5 1 7 0M1.5 4.5h6v7h-6zM7.5 7L11 5v6L7.5 9" /></svg></Cell>
          <Cell width="w-[24px]">
            <svg width="18" height="17" viewBox="0 0 18 17"><path d="M1 0l3 2-3 2zM5 0l3 2-3 2zM11 0l3 2-3 2zM15 0l3 2-3 2zM11 6l3 2-3 2z" fill="#fff" /><rect x="0" y="7" width="9" height="10" fill="#e81123" /><text x="4.5" y="15" textAnchor="middle" fontSize="8" fontWeight="700" fill="#fff">2</text></svg>
          </Cell>
          <Cell width="w-[23px]">
            <svg width="17" height="14" viewBox="0 0 17 14"><path d="M.5 4.5h3L7 1v12L3.5 9.5h-3z" fill="none" stroke="#fff" /><circle cx="12" cy="9" r="4.5" fill="#d62d3a" /><path d="M10 7l4 4M14 7l-4 4" stroke="#fff" /></svg>
          </Cell>
          <Cell width="w-[26px]">
            <svg width="16" height="14" viewBox="0 0 16 14"><rect x=".5" y="2.5" width="11" height="7" fill="none" stroke="#fff" /><rect x="2" y="4" width="5" height="4" fill="#fff" /><circle cx="11" cy="9.5" r="4.500" fill="#107c10" /><path d="M11 7v5" stroke="#fff" /></svg>
          </Cell>
          <Cell width="w-[24px]">
            <svg width="14" height="14" viewBox="0 0 14 14" fill="none" stroke="#ddd"><path d="M.5 13C.5 6 6 .5 13 .5M3.5 13c0-5 4-9.5 9.5-9.5M6.5 13c0-3.500 3-6.500 6.500-6.500" /><circle cx="12" cy="12" r="1.2" fill="#fff" stroke="none" /></svg>
          </Cell>
          <Cell width="w-[28px]">
            <svg width="22" height="13" viewBox="0 0 22 13" fill="none" stroke="#fff"><rect x=".5" y=".5" width="21" height="12" /><path d="M3 4h16M3 6.5h16" strokeDasharray="1 1" /><path d="M6 9.5h10" /></svg>
          </Cell>
          <span className="w-[41px] text-center text-[12.5px]">ENG</span>
          <div className="w-[66px] text-center text-[12.5px] leading-[18px]">
            <div>17:02</div>
            <div className="whitespace-nowrap">28-08-2021</div>
          </div>
          <Cell width="w-[43px]">
            <svg width="16" height="16" viewBox="0 0 16 16"><path d="M0 0h16v12H9.5L8 14.5 6.5 12H0z" fill="#fff" /><path d="M3 3.5h10M3 6h10M3 8.5h7" stroke="#1c1c1c" /></svg>
          </Cell>
          <div className="w-[12px]" />
        </div>
      </div>
    </div>
  );
}
